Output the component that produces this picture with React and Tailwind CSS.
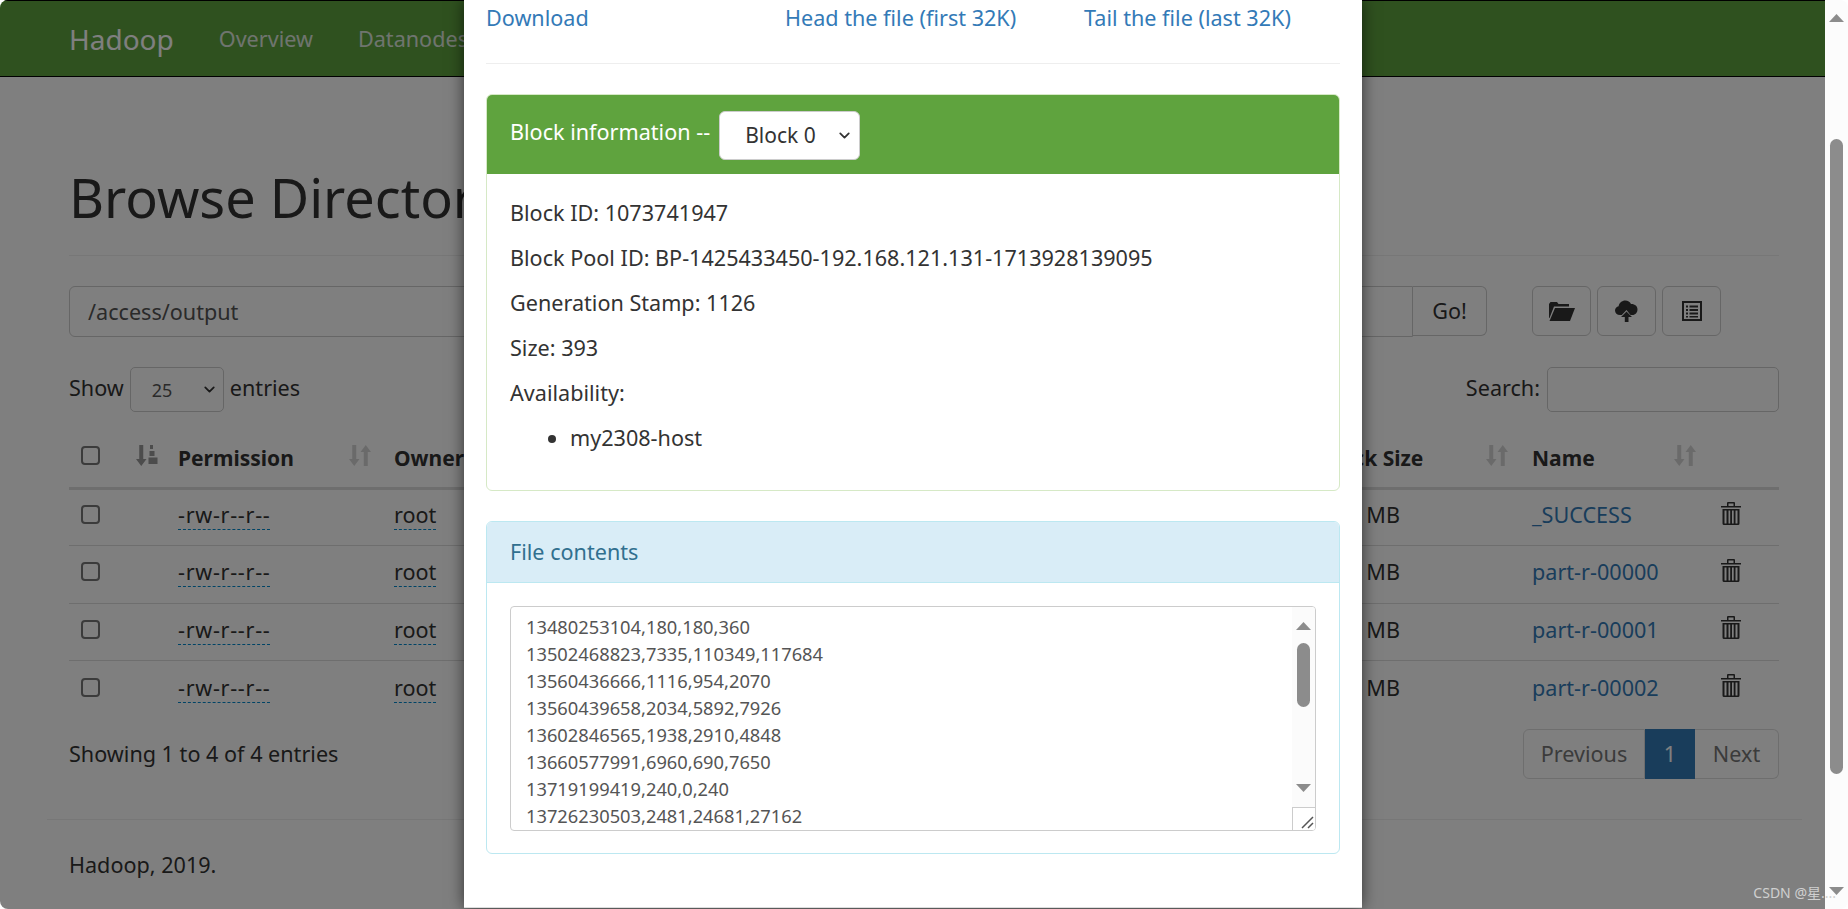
import React from "react";
import { ChevronDown } from "lucide-react";

const FONT = "font-['Noto_Sans','Noto_Sans_CJK_SC',sans-serif]";

const ROWS = ["_SUCCESS", "part-r-00000", "part-r-00001", "part-r-00002"];
const LINES = [
   "13480253104,180,180,360",
   "13502468823,7335,110349,117684",
   "13560436666,1116,954,2070",
   "13560439658,2034,5892,7926",
   "13602846565,1938,2910,4848",
   "13660577991,6960,690,7650",
   "13719199419,240,0,240",
   "13726230503,2481,24681,27162",
];

/* glyphicons redibujados */
function IconFolderOpen() {
   return (
      <svg width="27" height="20" viewBox="0 0 27 20" fill="#333">
         <path d="M1 3 L2.5 1 H9 L10.5 3 H21 V5.5 H6 L1.5 17 H1 Z" />
         <path d="M7 7 H27 L22 20 H1.5 Z" />
      </svg>
   );
}

function IconCloudUpload() {
   return (
      <svg width="23" height="22" viewBox="0 0 23 22" fill="#333">
         <path d="M5 15 C2 15 0 13 0 10.5 C0 8.3 1.6 6.6 3.6 6.2 C4.2 2.8 7 0.5 10.3 0.5 C12.9 0.5 15 2 16 4 C19.800 3.800 22.500 6.200 22.500 9.500 C22.500 12.500 20.300 15 17.500 15 H15.500 L11.500 10 L6.800 15 Z" />
         <path d="M11.500 11.500 L17 17 H13.500 V22 H9.800 V17 H6 Z" />
      </svg>
   );
}

function IconListAlt() {
   return (
      <svg width="20" height="20" viewBox="0 0 20 20">
         <path fill="#333" fillRule="evenodd" d="M0 0 H20 V20 H0 Z M2 2 V18 H18 V2 Z" />
         <path fill="#333" d="M4 4.500 H6 V6.500 H4 Z M7.500 4.500 H16 V6.500 H7.500 Z M4 8 H6 V10 H4 Z M7.500 8 H16 V10 H7.500 Z M4 11.500 H6 V13.500 H4 Z M7.500 11.500 H16 V13.500 H7.500 Z M4 15 H6 V16.500 H4 Z M7.500 15 H16 V16.500 H7.500 Z" />
      </svg>
   );
}

function IconTrash() {
   return (
      <svg width="20" height="23" viewBox="0 0 20 23" fill="#333">
         <path d="M0 4 H20 V5.500 H0 Z" />
         <path fillRule="evenodd" d="M6 4 V1 Q6 0 7 0 H13 Q14 0 14 1 V4 H12.500 V1.500 H7.500 V4 Z" />
         <path fillRule="evenodd" d="M1.500 7 H18.500 V21.500 Q18.500 23 17 23 H3 Q1.500 23 1.500 21.500 Z M3.500 8.500 V21.500 H5.500 V8.500 Z M7.500 8.500 V21.500 H9.200 V8.500 Z M11 8.500 V21.500 H12.700 V8.500 Z M14.500 8.500 V21.500 H16.500 V8.500 Z" />
      </svg>
   );
}

function IconSort() {
   return (
      <svg width="22" height="23" viewBox="0 0 22 23" fill="#333" className="opacity-20">
         <path d="M3.250 1 H7.250 V15 H10.500 L5.250 22 L0 15 H3.250 Z" />
         <path d="M14.750 22 H18.750 V8 H22 L16.750 1 L11.500 8 H14.750 Z" />
      </svg>
   );
}

function IconSortAttrs() {
   return (
      <svg width="22" height="23" viewBox="0 0 22 23" fill="#333" className="opacity-50">
         <path d="M3.250 1 H7.250 V15 H10.500 L5.250 22 L0 15 H3.250 Z" />
         <path d="M14 1 H17 V5 H14 Z M13.500 7 H18.500 V12 H13.500 Z M12.500 13.500 H21.500 V20 H12.500 Z" />
      </svg>
   );
}

function Triangle({ up, color = "#8c8c8c" }) {
   return (
      <svg width="15" height="8" viewBox="0 0 15 8" fill={color}>
         <path d={up ? "M7.500 0 L15 8 H0 Z" : "M0 0 H15 L7.500 8 Z"} />
      </svg>
   );
}

function Check() {
   return <input type="checkbox" readOnly className="appearance-none block w-[19px] h-[19px] border-2 border-[#767676] rounded-[4px] bg-white" />;
}

function IconButton({ children }) {
   return <div className="flex items-center justify-center w-[59px] h-[50px] border border-[#ccc] rounded-[6px] bg-white">{children}</div>;
}

function Th({ children, icon }) {
   return (
      <th className="relative px-3 pt-[18px] align-middle text-left text-[21px] font-bold">
         {children}
         {icon}
      </th>
   );
}

function Dashed({ children }) {
   return <span className="border-b border-dashed border-[#0088cc]">{children}</span>;
}

function Page() {
   return (
      <div className="relative w-[1825px] h-full overflow-hidden rounded-l-[8px] bg-white">
         {/* NAVBAR */}
         <div className="flex items-center h-[77px] border-y border-black bg-[#5fa33e] pl-[69px] text-[#dfe9df]">
            <span className="text-[28px] text-white">Hadoop</span>
            <span className="ml-[45px]">Overview</span>
            <span className="ml-[45px]">Datanodes</span>
         </div>

         <div className="pl-[47px] pr-[23px]">
            <div className="pl-[22px] pr-[23px]">
               <h1 className="mt-[91px] text-[54px] leading-[59px]">Browse Directory</h1>
               <div className="mt-[28px] border-t border-[#eee]" />

               {/* RUTA */}
               <div className="flex mt-[30px] h-[51px]">
                  <div className="flex items-center flex-1 pl-[18px] border border-[#ccc] rounded-l-[6px] text-[#555]">/access/output</div>
                  <div className="flex items-center justify-center w-[74px] h-[50px] border border-l-0 border-[#ccc] rounded-r-[6px]">Go!</div>
                  <div className="flex gap-[6px] ml-[45px] mr-[58px]">
                     <IconButton>
                        <IconFolderOpen />
                     </IconButton>
                     <IconButton>
                        <IconCloudUpload />
                     </IconButton>
                     <IconButton>
                        <IconListAlt />
                     </IconButton>
                  </div>
               </div>

               {/* SHOW / SEARCH */}
               <div className="flex items-center justify-between mt-[30px] h-[45px]">
                  <div className="flex items-center gap-[6px]">
                     <span className="-mt-[3px]">Show</span>
                     <div className="flex items-center justify-between w-[94px] h-[45px] pl-[21px] pr-[5px] border border-[#ccc] rounded-[5px] text-[18px] text-[#555]">
                        25
                        <ChevronDown size={17} strokeWidth={2.5} color="#333" />
                     </div>
                     <span className="-mt-[3px]">entries</span>
                  </div>
                  <div className="flex items-center gap-[7px]">
                     <span className="-mt-[3px]">Search:</span>
                     <div className="w-[232px] h-[45px] border border-[#ccc] rounded-[5px]" />
                  </div>
               </div>

               {/* TABLA */}
               <table className="w-full table-fixed border-collapse">
                  <colgroup>
                     <col className="w-[51px]" />
                     <col className="w-[46px]" />
                     <col className="w-[216px]" />
                     <col className="w-[140px]" />
                     <col className="w-[140px]" />
                     <col className="w-[140px]" />
                     <col className="w-[300px]" />
                     <col className="w-[206px]" />
                     <col className="w-[212px]" />
                     <col className="w-[189px]" />
                     <col className="w-[70px]" />
                  </colgroup>
                  <thead>
                     <tr className="h-[76px] border-b-[3px] border-[#ddd]">
                        <th className="pl-3 pt-[12px] text-left">
                           <Check />
                        </th>
                        <th className="relative">
                           <span className="absolute left-[16px] top-[32px]">
                              <IconSortAttrs />
                           </span>
                        </th>
                        <Th icon={<span className="absolute left-[183px] top-[32px]"><IconSort /></span>}>Permission</Th>
                        <Th>Owner</Th>
                        <Th />
                        <Th />
                        <Th />
                        <Th />
                        <Th icon={<span className="absolute left-[178px] top-[32px]"><IconSort /></span>}>Block Size</Th>
                        <Th icon={<span className="absolute left-[154px] top-[32px]"><IconSort /></span>}>Name</Th>
                        <th />
                     </tr>
                  </thead>
                  <tbody>
                     {ROWS.map((name, i) => (
                        <tr key={name} className={`h-[57.5px] ${i > 0 ? "border-t border-[#ddd]" : ""}`}>
                           <td className="pl-3 pb-[5px]">
                              <Check />
                           </td>
                           <td />
                           <td className="px-3 pb-[4px]">
                              <span className="tracking-[0.7px]">
                                 <Dashed>-rw-r--r--</Dashed>
                              </span>
                           </td>
                           <td className="px-3 pb-[4px]">
                              <Dashed>root</Dashed>
                           </td>
                           <td />
                           <td />
                           <td />
                           <td />
                           <td className="px-3 pb-[4px] text-right pr-[120px]">128 MB</td>
                           <td className="px-3 pb-[4px] text-[#337ab7]">{name}</td>
                           <td className="px-3 pb-[8px]">
                              <IconTrash />
                           </td>
                        </tr>
                     ))}
                  </tbody>
               </table>

               {/* PAGINACION */}
               <div className="flex items-center justify-between mt-[11px] h-[50px]">
                  <span>Showing 1 to 4 of 4 entries</span>
                  <div className="flex h-[50px] text-[#777]">
                     <div className="flex items-center justify-center w-[122px] border border-[#ddd] rounded-l-[6px]">Previous</div>
                     <div className="flex items-center justify-center w-[50px] bg-[#337ab7] text-white">1</div>
                     <div className="flex items-center justify-center w-[84px] border border-l-0 border-[#ddd] rounded-r-[6px]">Next</div>
                  </div>
               </div>
            </div>

            <div className="mt-[40px] border-t border-[#eee]" />
            <p className="mt-[30px] pl-[22px]">Hadoop, 2019.</p>
         </div>

         {/* FONDO OSCURO DEL MODAL */}
         <div className="absolute inset-0 bg-black/50" />

         <Modal />
      </div>
   );
}

function Modal() {
   return (
      <div className="absolute left-[464px] top-0 w-[898px] h-[908px] border-b border-[#ddd] bg-white px-[22px] pt-[3px] shadow-[0_0_15px_rgba(0,0,0,0.6)]">
         <div className="flex text-[#337ab7]">
            <span className="w-[299px]">Download</span>
            <span className="w-[299px]">Head the file (first 32K)</span>
            <span>Tail the file (last 32K)</span>
         </div>
         <div className="mt-[30px] border-t border-[#eee]" />

         {/* BLOQUE */}
         <div className="mt-[30px] border border-[#d6e9c6] rounded-[6px] overflow-hidden">
            <div className="flex items-center h-[79px] pl-[23px] pt-[1px] bg-[#5fa33e] text-white">
               <span className="-mt-[6px]">Block information --</span>
               <div className="flex items-center justify-between w-[141px] h-[49px] ml-[9px] pl-[25px] pr-[6px] rounded-[6px] bg-white border border-[#ccc] text-[21px] text-[#333]">
                  Block 0
                  <ChevronDown size={17} strokeWidth={2.5} color="#333" />
               </div>
            </div>
            <div className="px-[23px] pt-[24px] pb-[22px]">
               <p className="mb-[15px]">Block ID: 1073741947</p>
               <p className="mb-[15px]">Block Pool ID: BP-1425433450-192.168.121.131-1713928139095</p>
               <p className="mb-[15px]">Generation Stamp: 1126</p>
               <p className="mb-[15px]">Size: 393</p>
               <p className="mb-[15px]">Availability:</p>
               <ul className="mb-[15px] pl-[60px] list-disc">
                  <li>my2308-host</li>
               </ul>
            </div>
         </div>

         {/* CONTENIDO */}
         <div className="mt-[30px] border border-[#bce8f1] rounded-[6px] overflow-hidden">
            <div className="flex items-center h-[61px] pl-[23px] bg-[#d9edf7] text-[#31708f] border-b border-[#bce8f1]">File contents</div>
            <div className="px-[23px] pt-[23px] pb-[22px]">
               <div className="flex h-[225px] border border-[#ccc] rounded-[4px] overflow-hidden text-[18.3px] leading-[27px] text-[#555]">
                  <div className="flex-1 pl-[15px] pt-[6px] overflow-hidden">
                     {LINES.map((l) => (
                        <div key={l}>{l}</div>
                     ))}
                  </div>
                  <div className="flex flex-col items-center w-[23px] bg-[#fbfbfb]">
                     <div className="mt-[15px]">
                        <Triangle up />
                     </div>
                     <div className="mt-[13px] w-[13px] h-[65px] rounded-full bg-[#8c8c8c]" />
                     <div className="mt-[77px]">
                        <Triangle />
                     </div>
                     <div className="relative mt-[15px] w-[23px] h-[23px] border-l border-t border-[#ccc] bg-white">
                        <svg width="14" height="14" viewBox="0 0 14 14" className="absolute right-[1px] bottom-[1px]" stroke="#555" strokeWidth="1.5">
                           <path d="M2 13 L13 2 M8 13 L13 8" />
                        </svg>
                     </div>
                  </div>
               </div>
            </div>
         </div>
      </div>
   );
}

function ScrollBar() {
   return (
      <div className="flex flex-col items-center w-[23px] h-full bg-[#fcfcfc] rounded-r-[8px]">
         <div className="mt-[14px]">
            <Triangle up />
         </div>
         <div className="mt-[117px] w-[13px] h-[635px] rounded-full bg-[#8c8c8c]" />
         <div className="mt-[113px]">
            <Triangle />
         </div>
      </div>
   );
}

export default function App() {
   return (
      <div className={`relative flex w-[1848px] h-[909px] overflow-hidden bg-white text-[21.6px] leading-[30px] text-[#333] ${FONT}`}>
         <Page />
         <ScrollBar />
         <span className="absolute right-[12px] bottom-[6px] text-[14px] leading-[20px] text-[#d0d0d0]">CSDN @星....</span>
      </div>
   );
}
